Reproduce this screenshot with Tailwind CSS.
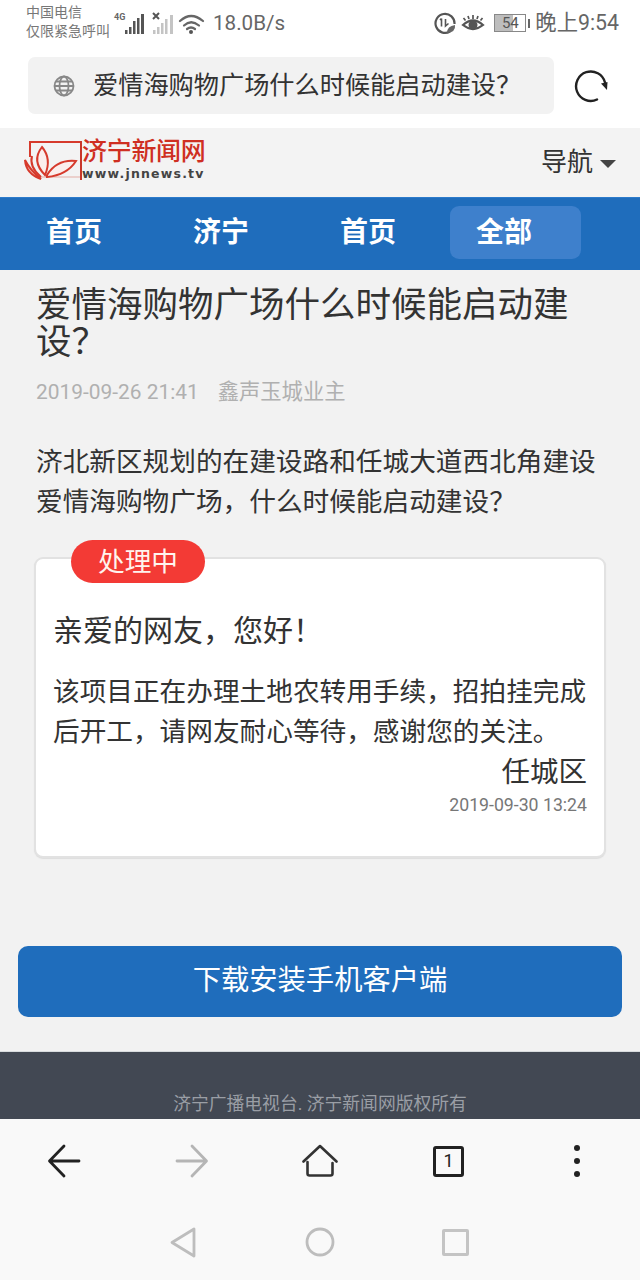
<!DOCTYPE html>
<html lang="zh"><head><meta charset="utf-8">
<script src="https://cdn.jsdelivr.net/npm/@tailwindcss/browser@4"></script>
</head>
<body class="m-0">
<div class="w-[640px] h-[1280px] overflow-hidden flex flex-col bg-[#f2f2f2] font-['Roboto','Noto_Sans_CJK_SC',sans-serif] text-[#333]">
  <!-- status bar -->
  <div class="h-[128px] bg-white shrink-0 flex flex-col">
    <div class="h-[46px] flex items-center text-[#666] relative">
      <div class="ml-[26px] w-[84px] text-[14px] leading-[19px] mt-[-3px] text-[#777] whitespace-nowrap"><div>中国电信</div><div>仅限紧急呼叫</div></div>
      <svg class="ml-[3px]" width="96" height="26" viewBox="0 0 96 26" fill="none">
        <text x="1" y="10" font-size="9" font-weight="700" fill="#666" font-family="Roboto">4G</text>
        <g fill="#555"><rect x="12" y="20" width="2.500" height="4"/><rect x="16" y="17" width="2.500" height="7"/><rect x="20" y="11" width="2.500" height="13"/><rect x="24" y="8" width="2.500" height="16"/><rect x="28" y="4" width="3" height="20"/></g>
        <path d="M40 3l6 6M46 3l-6 6" stroke="#555" stroke-width="2"/>
        <g fill="#c4c4c4"><rect x="40" y="20" width="2.500" height="4"/><rect x="44" y="17" width="2.500" height="7"/><rect x="48" y="13" width="2.500" height="11"/><rect x="52" y="9" width="2.500" height="15"/><rect x="57" y="5" width="3" height="19"/></g>
        <g stroke="#666" stroke-width="2.200" stroke-linecap="round"><path d="M67 11 Q78 1 90 11"/><path d="M71 15.500 Q78 9 86 15.500"/><path d="M74 19 Q78 16 82 19"/></g>
        <circle cx="78" cy="22" r="2" fill="#555"/>
      </svg>
      <span class="ml-[4px] text-[20.600px] text-[#666]">18.0B/s</span>
      <div class="ml-auto mr-[21px] flex items-center">
        <svg width="24" height="24" viewBox="0 0 24 24" fill="none"><path d="M17 20.500 A9.500 9.500 0 1 1 21.500 13" stroke="#555" stroke-width="2.200"/><path d="M8.500 7.500v8M7 9l1.500-1.500M12.500 8v7l3-2.500" stroke="#555" stroke-width="1.600"/><path d="M14 22 Q14 15 22 14 Q23 21 14 22z" fill="#666"/></svg>
        <svg class="ml-[4px]" width="24" height="22" viewBox="0 0 24 22" fill="none"><path d="M2 13 Q12 4 22 13 Q12 21 2 13z" stroke="#555" stroke-width="2.200"/><circle cx="12" cy="13" r="4.500" fill="#555"/><path d="M2.500 6l2 2.500M12 3v4M21.500 6l-2 2.500M7 4l1 3M17 4l-1 3" stroke="#555" stroke-width="1.700"/></svg>
        <div class="ml-[9px] w-[32px] h-[18px] border border-[#888] relative flex items-center justify-center"><div class="absolute left-0 top-0 bottom-0 w-[18px] bg-[#bdbdbd]"></div><span class="relative text-[15px] leading-none text-[#555]">54</span></div>
        <div class="ml-[2px] w-[2px] h-[9px] bg-[#666]"></div>
        <span class="ml-[5px] text-[21.300px] text-[#666] leading-none whitespace-nowrap">晚上9:54</span>
      </div>
    </div>
    <div class="flex items-center mt-[11px]">
      <div class="ml-[28px] w-[526px] h-[57px] rounded-[7px] bg-[#f2f2f2] flex items-center">
        <svg class="ml-[25px]" width="22" height="22" viewBox="0 0 22 22" fill="none" stroke="#888" stroke-width="1.800"><circle cx="11" cy="11" r="9.500"/><ellipse cx="11" cy="11" rx="4.500" ry="9.500"/><path d="M1.500 11h19M2.800 6.500h16.400M2.800 15.500h16.400"/></svg>
        <span class="ml-[18px] text-[25.200px] leading-none text-[#333] whitespace-nowrap">爱情海购物广场什么时候能启动建设？</span>
      </div>
      <svg class="ml-[20px]" width="34" height="34" viewBox="0 0 34 34" fill="none"><path d="M23 30.500 A14.700 14.700 0 1 1 31 13.500" stroke="#222" stroke-width="2.400" stroke-linecap="round"/><path d="M27 14.500l6.500-1.500-0.500 8z" fill="#222"/></svg>
    </div>
  </div>
  <!-- site header -->
  <div class="h-[69px] shrink-0 bg-[#f3f3f3] flex items-center justify-between relative">
    <div class="ml-[23px] mt-[-2px] flex items-stretch h-[42px]">
      <svg width="57" height="40" viewBox="0 0 57 40" fill="none" stroke="#d63a2c" stroke-width="1.600">
        <path d="M57 1H7V16" stroke-width="2"/>
        <path d="M12 36H57" stroke="#e8c4bf"/>
        <path d="M2 19 Q3 33 18 38 Q7 29 2 19z" fill="#f0bdb6" stroke-width="2"/>
        <path d="M19 6 Q8 20 22 34 Q29 18 19 6z" fill="#fbeeec" stroke-width="2"/>
        <path d="M24 34 Q34 18 53 20 Q44 34 24 36z" fill="#fbeeec" stroke-width="2"/>
        <path d="M9 15 Q6 26 18 36" stroke-width="2"/>
      </svg>
      <div class="w-[2px] h-[39px] bg-[#c8372b]"></div>
      <div class="flex flex-col mt-[-4px]">
        <span class="text-[25px] leading-[30px] font-medium text-[#cf2f22] tracking-[-0.300px] whitespace-nowrap">济宁新闻网</span>
        <span class="text-[12.500px] leading-[12px] font-bold text-[#444] tracking-[1.200px] font-['DejaVu_Sans',sans-serif] mt-[1px]">www.jnnews.tv</span>
      </div>
    </div>
    <div class="mr-[24px] flex items-center mt-[-1px]">
      <span class="text-[26px] leading-none text-[#333] mr-[1px]">导航</span>
      <div class="ml-[6px] mt-[3px] w-0 h-0 border-l-[8px] border-r-[8px] border-t-[8px] border-l-transparent border-r-transparent border-t-[#444]"></div>
    </div>
  </div>
  <!-- nav -->
  <div class="h-[73px] shrink-0 bg-[#1f6dbc] border-t-[1px] border-[#2c7bcb] flex items-start pt-[8px] text-white font-bold text-[28px]">
    <div class="ml-[46px] w-[147px] h-[53px] flex items-center">首页</div>
    <div class="w-[147px] h-[53px] flex items-center">济宁</div>
    <div class="w-[110px] h-[53px] flex items-center">首页</div>
    <div class="w-[131px] h-[53px] rounded-[9px] bg-[#3e80cc] flex items-center pl-[26px]">全部</div>
  </div>
  <!-- content -->
  <div class="flex-1 flex flex-col relative">
    <h1 class="ml-[36px] mr-[36px] mt-[17px] text-[35.500px] leading-[37px] font-normal text-[#333]">爱情海购物广场什么时候能启动建设？</h1>
    <div class="ml-[36px] mt-[17px] text-[21.300px] leading-[28px] text-[#b0b0b0] flex"><span class="text-[20.900px]">2019-09-26 21:41</span><span class="ml-[19px]">鑫声玉城业主</span></div>
    <p class="ml-[36px] mr-[36px] mt-[36px] text-[26.670px] leading-[40px] text-[#333]">济北新区规划的在建设路和任城大道西北角建设爱情海购物广场，什么时候能启动建设？</p>
    <div class="relative ml-[34px] mr-[34px] mt-[35px] h-[301px] bg-white rounded-[9px] border-2 border-[#e2e2e2] shadow-[0_1px_1px_#ddd]">
      <div class="absolute left-[35px] top-[-19px] w-[134px] h-[43px] rounded-full bg-[#f33a35] text-[#fff3ee] text-[26.670px] flex items-center justify-center">处理中</div>
      <div class="pl-[17px] pr-[17px] pt-[52px]">
        <div class="text-[30px] leading-[40px] text-[#333]">亲爱的网友，您好！</div>
        <p class="mt-[21px] text-[26.670px] leading-[40px] text-[#333]">该项目正在办理土地农转用手续，招拍挂完成后开工，请网友耐心等待，感谢您的关注。</p>
        <div class="text-right text-[28.500px] leading-[36px] text-[#333] mt-[3px]">任城区</div>
        <div class="text-right text-[17.700px] leading-[24px] text-[#777] mt-[2px]">2019-09-30 13:24</div>
      </div>
    </div>
    <div class="mx-[18px] mt-[88px] h-[71px] rounded-[10px] bg-[#1f6dbc] text-white text-[28.300px] flex items-center justify-center">下载安装手机客户端</div>
    <div class="mt-[34px] border-t border-[#d8dcde] flex-1 bg-[#424853] text-center text-[#9a9ea5] text-[17.800px] pt-[40px] leading-[24px]">济宁广播电视台. 济宁新闻网版权所有</div>
  </div>
  <!-- browser bottom -->
  <div class="h-[161px] shrink-0 bg-[#f9f9f9] flex flex-col">
    <div class="h-[84px] relative flex items-center">
      <svg class="ml-[46px]" width="36" height="36" viewBox="0 0 36 36" fill="none" stroke="#222" stroke-width="2.800" stroke-linecap="round" stroke-linejoin="round"><path d="M33 18H4M18 3L3.500 18 18 33"/></svg>
      <svg class="ml-[92px]" width="36" height="36" viewBox="0 0 36 36" fill="none" stroke="#b5b5b5" stroke-width="2.800" stroke-linecap="round" stroke-linejoin="round"><path d="M3 18H32M18 3L32.500 18 18 33"/></svg>
      <svg class="ml-[92px]" width="36" height="36" viewBox="0 0 36 36" fill="none" stroke="#333" stroke-width="2.600" stroke-linecap="round" stroke-linejoin="round"><path d="M1.500 18.500L18 3 34.500 18.500M5.500 19V30.500a2 2 0 0 0 2 2H28.500a2 2 0 0 0 2-2V20"/></svg>
      <div class="ml-[95px] w-[31px] h-[31px] rounded-[3px] border-[3px] border-[#222] flex items-center justify-center text-[18px] leading-none text-[#222]">1</div>
      <div class="ml-[110px] flex flex-col gap-[7px]"><div class="w-[6px] h-[6px] rounded-full bg-[#222]"></div><div class="w-[6px] h-[6px] rounded-full bg-[#222]"></div><div class="w-[6px] h-[6px] rounded-full bg-[#222]"></div></div>
    </div>
    <div class="flex-1 relative flex items-start pt-[24px]">
      <svg class="ml-[169px]" width="28" height="32" viewBox="0 0 28 32" fill="none" stroke="#bdbdbd" stroke-width="2.800" stroke-linejoin="round"><path d="M25 2V29L3 15.500z"/></svg>
      <svg class="ml-[108px]" width="30" height="30" viewBox="0 0 30 30" fill="none" stroke="#bdbdbd" stroke-width="2.800"><circle cx="15" cy="15" r="13"/></svg>
      <div class="ml-[107px] w-[27px] h-[27px] mt-[2px] rounded-[2px] border-[3px] border-[#c4c4c4]"></div>
    </div>
  </div>
</div>
</body></html>
